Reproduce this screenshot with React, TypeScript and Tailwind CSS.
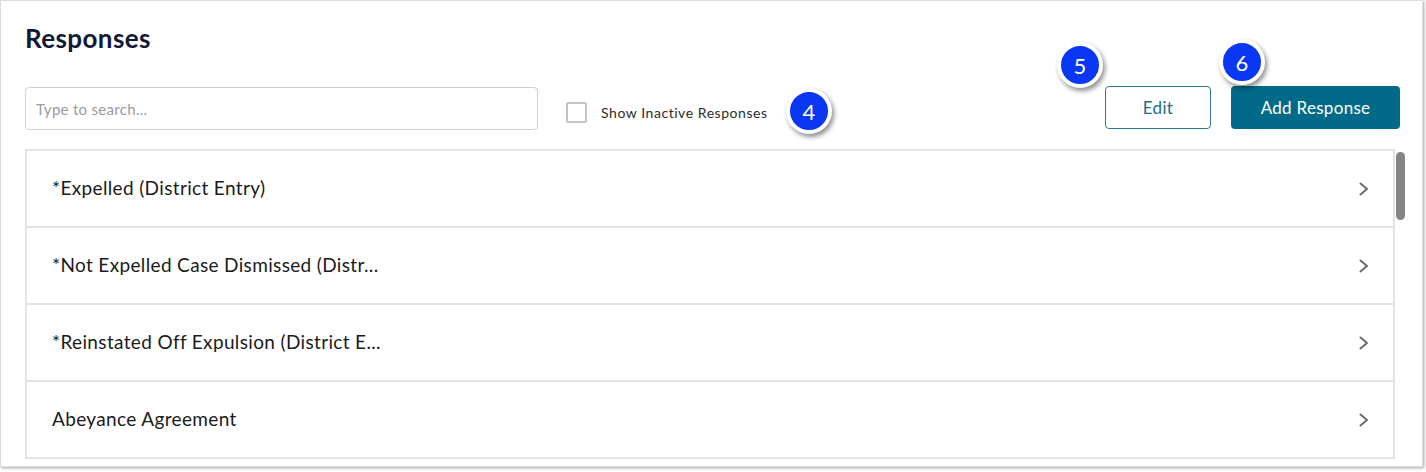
import React from 'react';

const rows = [
  '*Expelled (District Entry)',
  '*Not Expelled Case Dismissed (Distr...',
  '*Reinstated Off Expulsion (District E...',
  'Abeyance Agreement',
];

function Badge({ n, className }: { n: number; className: string }) {
  return (
    <div
      className={`absolute flex h-[46px] w-[46px] items-center justify-center rounded-full border-[4px] border-white bg-[#0a37f4] text-[22px] text-white shadow-[2px_3px_5px_rgba(0,0,0,0.45)] ${className}`}
    >
      {n}
    </div>
  );
}

function Chevron() {
  return (
    <svg width="10" height="14" viewBox="0 0 10 14" fill="none">
      <polyline points="1.5,1.5 8,7 1.5,12.5" stroke="#6b6b6b" strokeWidth="2" strokeLinecap="round" strokeLinejoin="round" />
    </svg>
  );
}

export default function App() {
  return (
    <div className="h-[472px] w-[1426px] bg-white font-['Lato',sans-serif]">
      <div className="h-[467px] w-[1423px] overflow-hidden border border-[#dcdcdc] bg-white shadow-[1px_1px_3px_rgba(0,0,0,0.35)]">
        <div className="pl-[24px] pr-[10px] pt-[20px]">
          <h1 className="text-[26px] font-bold leading-[34px] tracking-[0.4px] text-[#111936]">Responses</h1>

          <div className="mt-[31px] flex items-start">
            <input
              className="mt-[1px] h-[43px] w-[513px] rounded-[4px] border border-[#cfd0d8] px-[10px] text-[15px] tracking-[0.3px] text-[#333] placeholder:text-[#9a9aa0] outline-none"
              placeholder="Type to search..."
            />
            <label className="relative ml-[28px] mt-[16px] flex items-center">
              <span className="h-[21px] w-[21px] rounded-[2px] border-2 border-[#c3c5ce] bg-white" />
              <span className="ml-[14px] text-[14px] tracking-[0.55px] text-[#2b2b2b]">Show Inactive Responses</span>
              <Badge n={4} className="left-[220px] top-[-14px]" />
            </label>

            <div className="ml-auto mr-[12px] flex items-center gap-[20px]">
              <button className="relative h-[43px] w-[106px] rounded-[4px] border border-[#2b7c92] text-[17px] tracking-[0.3px] text-[#1f6f86]">
                Edit
                <Badge n={5} className="left-[-49px] top-[-45px]" />
              </button>
              <button className="relative h-[43px] w-[169px] rounded-[4px] bg-[#026a89] text-[17px] tracking-[0.3px] text-white">
                Add Response
                <Badge n={6} className="left-[-12px] top-[-47px]" />
              </button>
            </div>
          </div>

          <div className="mt-[19px] flex">
            <div className="w-[1370px] shrink-0 border-x-2 border-t-2 border-[#e3e3e8]">
              {rows.map((r) => (
                <div key={r} className="flex h-[77px] items-center justify-between border-b-2 border-[#e3e3e8] pl-[25px] pr-[24px]">
                  <span className="text-[19px] tracking-[0.35px] text-[#1b1b1b]">{r}</span>
                  <Chevron />
                </div>
              ))}
            </div>
            <div className="ml-[1px] w-[10px] shrink-0 pt-[3px]">
              <div className="h-[68px] w-[9px] rounded-full bg-[#858585]" />
            </div>
          </div>
        </div>
      </div>
    </div>
  );
}
